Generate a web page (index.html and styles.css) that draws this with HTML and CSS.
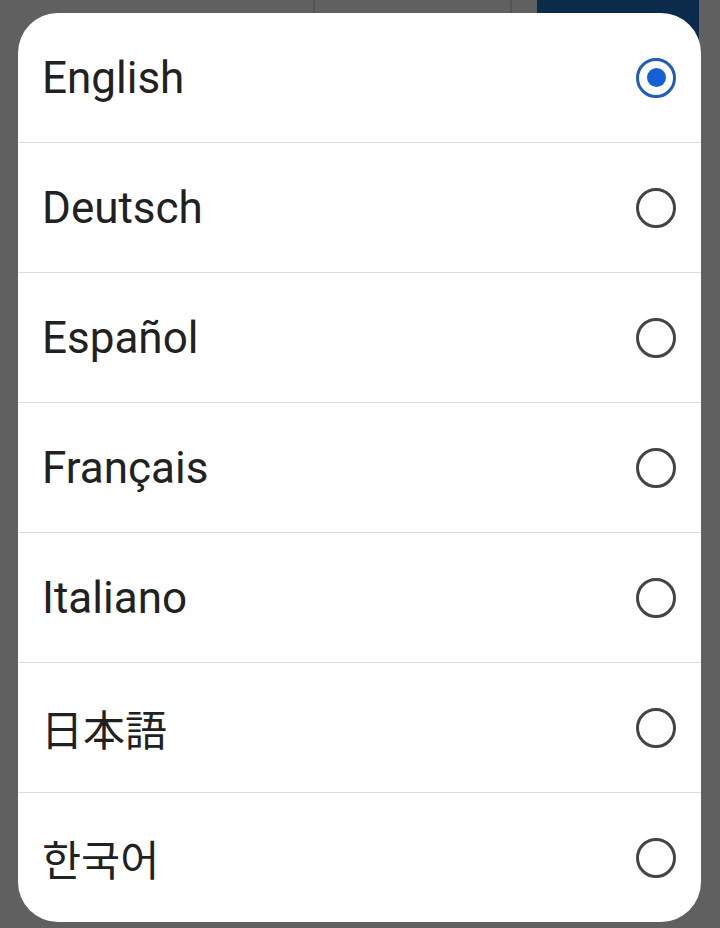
FILE: index.html
```html
<!DOCTYPE html>
<html lang="en">
<head>
<meta charset="utf-8">
<title>Language</title>
<link rel="stylesheet" href="styles.css">
</head>
<body>
<div class="page">
  <div class="actions">
    <div class="btn btn-outline"></div>
    <div class="btn btn-solid"></div>
  </div>
</div>
<div class="dialog" role="radiogroup">
  <div class="row"><span class="label">English</span><span class="radio checked"></span></div>
  <div class="row"><span class="label">Deutsch</span><span class="radio"></span></div>
  <div class="row"><span class="label">Español</span><span class="radio"></span></div>
  <div class="row"><span class="label">Français</span><span class="radio"></span></div>
  <div class="row"><span class="label">Italiano</span><span class="radio"></span></div>
  <div class="row"><span class="label" lang="ja">日本語</span><span class="radio"></span></div>
  <div class="row"><span class="label" lang="ko">한국어</span><span class="radio"></span></div>
</div>
</body>
</html>
```
FILE: styles.css
```css
html, body {
  margin: 0;
  padding: 0;
  height: 100%;
  background: #606060;
  overflow: hidden;
}
body {
  font-family: Roboto, "Noto Sans CJK JP", "Noto Sans CJK KR", sans-serif;
}
.page {
  height: 928px;
}
.actions {
  display: flex;
  justify-content: flex-end;
  gap: 25px;
  padding-right: 21px;
  margin-top: -20px;
}
.btn {
  height: 80px;
  border-radius: 14px;
  box-sizing: border-box;
}
.btn-outline {
  width: 199px;
  border: 2px solid #545454;
}
.btn-solid {
  width: 162px;
  background: #0c2b4a;
}
.dialog {
  position: absolute;
  left: 18px;
  top: 13px;
  width: 683px;
  background: #ffffff;
  border-radius: 40px;
  overflow: hidden;
}
.row {
  display: flex;
  align-items: center;
  justify-content: space-between;
  height: 129px;
  padding: 0 25px 0 24px;
  border-top: 1px solid #dcdcdc;
}
.row:first-child {
  border-top: none;
}
.label {
  font-size: 44px;
  color: #212121;
}
.label:lang(ja) {
  font-family: "Noto Sans CJK JP", sans-serif;
  font-size: 42px;
  margin-left: -1px;
}
.label:lang(ko) {
  font-family: "Noto Sans CJK KR", sans-serif;
  font-size: 42.5px;
}
.radio {
  width: 40px;
  height: 40px;
  box-sizing: border-box;
  border: 3.5px solid #444444;
  border-radius: 50%;
  display: flex;
  align-items: center;
  justify-content: center;
}
.radio.checked {
  border-color: #1f5cbd;
}
.radio.checked::after {
  content: "";
  width: 19px;
  height: 19px;
  border-radius: 50%;
  background: #1660d6;
}
```
